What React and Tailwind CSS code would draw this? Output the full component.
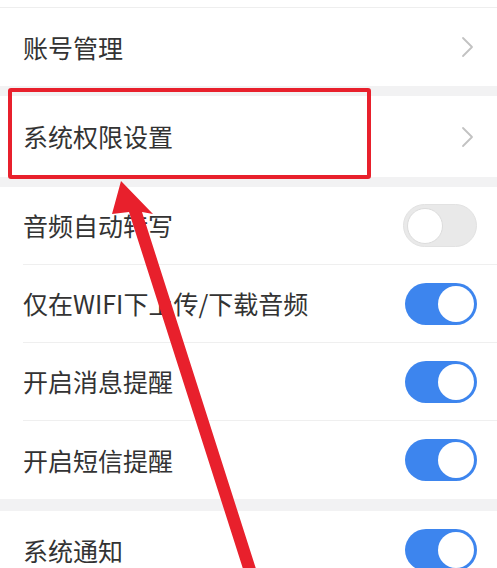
import React from "react";

const font = { fontFamily: '"Noto Sans CJK SC", "Noto Sans", sans-serif' };

function Chevron() {
  return (
    <svg width="13" height="22" viewBox="0 0 13 22" className="shrink-0">
      <polyline points="2,2 11,11 2,20" fill="none" stroke="#c2c2c2" strokeWidth="1.8" strokeLinecap="round" strokeLinejoin="round" />
    </svg>
  );
}

function Toggle({ on }) {
  if (on) {
    return (
      <div className="w-[72px] h-[42px] rounded-full bg-[#3d85ee] flex items-center justify-end pr-[3px] shrink-0">
        <div className="w-[36px] h-[36px] rounded-full bg-white" />
      </div>
    );
  }
  return (
    <div className="w-[74px] h-[43px] rounded-full bg-[#e9e9e9] border border-[#e2e2e2] flex items-center pl-[3px] shrink-0">
      <div className="w-[36px] h-[36px] rounded-full bg-white border border-[#dcdcdc]" />
    </div>
  );
}

function ToggleRow({ label, on, last }) {
  return (
    <div className="h-[78px] pl-[23px] bg-white">
      <div className={"h-full flex items-center justify-between pr-[20px] " + (last ? "" : "border-b border-[#efefef]")}>
        <span className="text-[25px] text-[#333333] leading-none">{label}</span>
        <Toggle on={on} />
      </div>
    </div>
  );
}

export default function App() {
  return (
    <div className="relative w-[497px] h-[568px] overflow-hidden bg-white" style={font}>
      <div className="h-[8px] border-b border-[#eeeeee]" />
      <div className="h-[78px] flex items-center justify-between pl-[23px] pr-[23px]">
        <span className="text-[25px] text-[#333333] leading-none">账号管理</span>
        <Chevron />
      </div>
      <div className="h-[10px] bg-[#f2f2f3]" />
      <div className="h-[81px] flex items-center justify-between pl-[23px] pr-[23px]">
        <span className="text-[25px] text-[#333333] leading-none">系统权限设置</span>
        <Chevron />
      </div>
      <div className="h-[10px] bg-[#f2f2f3]" />
      <ToggleRow label="音频自动转写" on={false} />
      <ToggleRow label="仅在WIFI下上传/下载音频" on />
      <ToggleRow label="开启消息提醒" on />
      <ToggleRow label="开启短信提醒" on last />
      <div className="h-[12px] bg-[#f2f2f3]" />
      <ToggleRow label="系统通知" on last />

      <div className="absolute left-[8px] top-[88px] w-[363px] h-[91px] border-[4px] border-[#e8202c] rounded-[3px] pointer-events-none" />
      <svg className="absolute left-0 top-0 pointer-events-none" width="497" height="568" viewBox="0 0 497 568">
        <polygon
          points="121,181 153,214 142,212 257,572 244,572 129,212 112,214"
          fill="#e8202c"
        />
      </svg>
    </div>
  );
}
